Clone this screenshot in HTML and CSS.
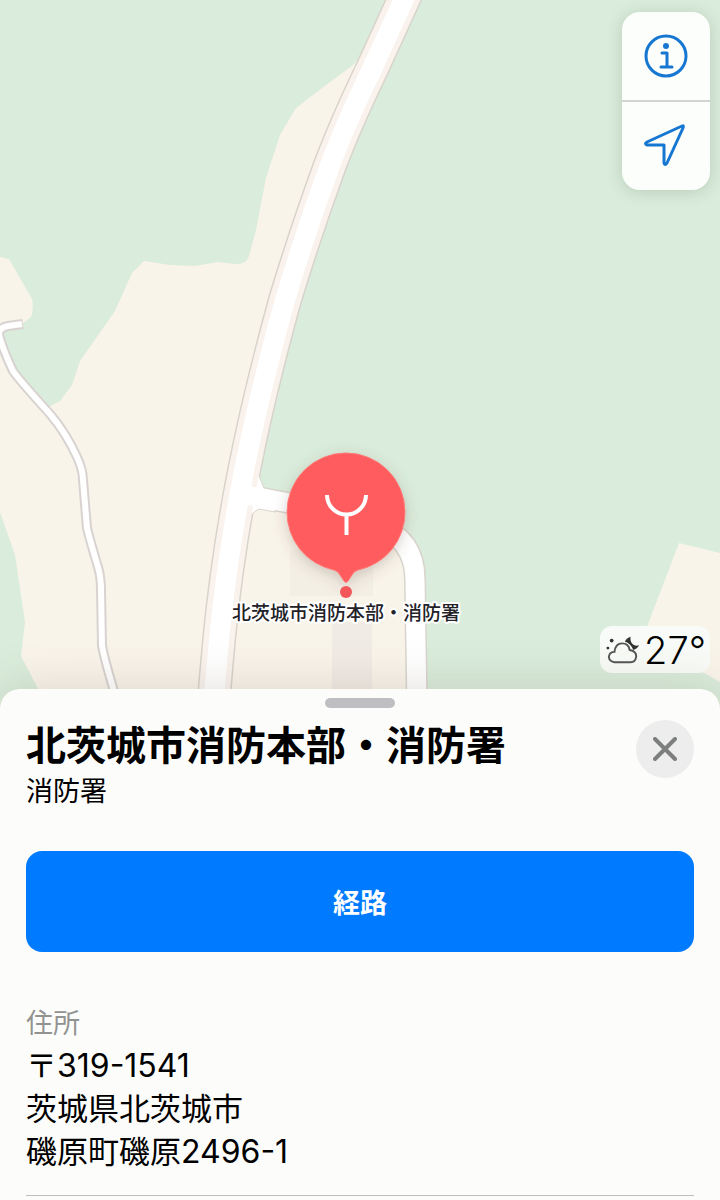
FILE: index.html
```html
<!DOCTYPE html>
<html lang="ja">
<head>
    <meta charset="UTF-8">
    <meta name="viewport" content="width=device-width, initial-scale=1.0">
    <title>北茨城市消防本部・消防署</title>
    <link rel="stylesheet" href="styles.css">
</head>
<body>
    <main class="page">
        <section class="map" aria-label="地図">
            <svg class="map-canvas" viewBox="0 0 720 708">
                <defs>
                    <filter id="pinShadow" x="-30%" y="-30%" width="160%" height="160%">
                        <feDropShadow dx="0" dy="4" stdDeviation="7" flood-color="#5a4a40" flood-opacity="0.25"/>
                    </filter>
                </defs>

                <!-- Land -->
                <path class="land" d="M360 58L352 66L330 82L296 108L280 135L266 178L256 230L249 256Q246 265 235 264L218 262L195 266L170 265L144 261L132 273L115 311L80 361L72 385L60 401L49 407L50 414L13 371L-1 335L8 326L22 324L31 317Q34 308 32 299L9 259L0 257V512L15 555L25 622L21 656L48 708H222L245 500L300 280Z"/>
                <path class="land" d="M248 496H380L412 545L418 708H220Z"/>
                <path class="land" d="M679 543L720 553V682L706 674L640 645Z"/>
                <path class="building" d="M290 550H373V596H290Z"/>
                <path class="building dark" d="M332 622H372V708H332Z"/>

                <!-- Small road -->
                <path class="path-edge" d="M23 324L8 326Q-2 328 -1 335Q3 350 13 371Q20 381 50 414Q66 433 77 457Q83 470 83 480L87 528Q89 537 98 567Q101 577 101 590L102 645Q103 655 119 708"/>
                <path class="path-fill" d="M22 324L8 326Q-2 328 -1 335Q3 350 13 371Q20 381 50 414Q66 433 77 457Q83 470 83 480L87 528Q89 537 98 567Q101 577 101 590L102 645Q103 655 119 708"/>

                <!-- Main road and side road -->
                <path class="side-edge" d="M246 495L289 503L375 525Q415 538 415 580L417 708"/>
                <path class="main-edge" d="M409 -12L372 69Q345 125 329 168Q304 237 285 300Q258 398 243 476Q227 558 219 640L213 708"/>
                <path class="corner-edge" d="M264 453L258 474L264 488L275 491V512L259 509Q249 514 249 522L246 540L232 500Z"/>
                <path class="main-shoulder" d="M409 -12L372 69Q345 125 329 168Q304 237 285 300Q258 398 243 476Q227 558 219 640L213 708"/>
                <path class="side-fill" d="M246 495L289 503L375 525Q415 538 415 580L417 708"/>
                <path class="main-fill" d="M409 -12L372 69Q345 125 329 168Q304 237 285 300Q258 398 243 476Q227 558 219 640L213 708"/>

                <!-- Pin -->
                <path class="pin" filter="url(#pinShadow)" d="M346 453A59 59 0 0 1 405 512A59 59 0 0 1 358 570Q354 571 352 575L348 581Q346 584 344 581L340 575Q338 571 334 570A59 59 0 0 1 287 512A59 59 0 0 1 346 453Z"/>
                <path class="pin-icon" d="M327 495A19.500 19.500 0 0 0 366 495M346.500 515V535"/>
                <circle class="pin-dot" cx="346" cy="592" r="6"/>
                <text class="pin-label" x="346" y="620">北茨城市消防本部・消防署</text>
            </svg>

            <div class="map-controls">
                <button type="button" aria-label="情報">
                    <svg class="icon" viewBox="0 0 44 44">
                        <circle cx="22" cy="22" r="20"/>
                        <path d="M18 19H23V33M17 33H28"/>
                        <circle class="icon-dot" cx="22" cy="12" r="3"/>
                    </svg>
                </button>
                <button type="button" aria-label="現在地">
                    <svg class="icon" viewBox="0 0 44 44">
                        <path d="M38 2L3 18Q0 20 3 21H20V39Q21 42 23 39L39 4Q40 1 38 2Z"/>
                    </svg>
                </button>
            </div>

            <div class="weather">
                <svg class="weather-icon" viewBox="0 0 36 32">
                    <circle cx="6" cy="6" r="2"/>
                    <circle cx="2" cy="14" r="1.500"/>
                    <path d="M26 2C25 9 30 13 35 11Q33 15 29 16Q26 9 20 7Q22 3 26 2Z"/>
                    <path class="cloud" d="M9 29Q3 28 3 23Q4 18 9 18Q10 9 17 9Q24 9 25 16Q32 17 32 23Q31 29 26 29Z"/>
                </svg>
                <span>27°</span>
            </div>
        </section>

        <section class="sheet">
            <div class="grabber"></div>
            <header class="sheet-header">
                <div>
                    <h1>北茨城市消防本部・消防署</h1>
                    <p class="category">消防署</p>
                </div>
                <button type="button" class="close" aria-label="閉じる">
                    <svg viewBox="0 0 24 24"><path d="M2 2L22 22M22 2L2 22"/></svg>
                </button>
            </header>
            <button type="button" class="route">経路</button>
            <div class="address">
                <h2>住所</h2>
                <address>〒<span class="digits">319-1541</span><br>茨城県北茨城市<br>磯原町磯原<span class="digits">2496-1</span></address>
            </div>
        </section>
    </main>
</body>
</html>
```
FILE: styles.css
```css
* {
    box-sizing: border-box;
}

body {
    margin: 0;
    font-family: Inter, "Noto Sans CJK JP", sans-serif;
    background-color: #fcfdfb;
    color: #000;
}

h1, h2, p, address {
    margin: 0;
    font-style: normal;
}

button {
    display: flex;
    justify-content: center;
    align-items: center;
    padding: 0;
    border: none;
    font-family: inherit;
    cursor: pointer;
}

.page {
    display: flex;
    flex-direction: column;
    min-height: 100vh;
    overflow: hidden;
}

/* Map */
.map {
    position: relative;
    background-color: #daecdb;
}

.map-canvas {
    display: block;
    width: 100%;
}

.land {
    fill: #f9f4ea;
}

.building {
    fill: #f4efe5;
}

.building.dark {
    fill: #f0ebe4;
}

.path-edge, .path-fill,
.side-edge, .side-fill,
.main-edge, .main-shoulder, .main-fill {
    fill: none;
}

.path-edge {
    stroke: #d8d3d0;
    stroke-width: 10px;
}

.path-fill {
    stroke: #fff;
    stroke-width: 6px;
}

.side-edge {
    stroke: #d9d5cd;
    stroke-width: 22px;
}

.side-fill {
    stroke: #fff;
    stroke-width: 19px;
}

.main-edge {
    stroke: #d8d3cb;
    stroke-width: 34px;
}

.main-shoulder {
    stroke: #faf3ed;
    stroke-width: 31px;
}

.main-fill {
    stroke: #fff;
    stroke-width: 20px;
}

.corner-edge {
    fill: #fff;
    stroke: #d9d5cd;
    stroke-width: 1px;
}

.pin {
    fill: #ff5c5e;
    stroke: #ff7b76;
    stroke-width: 1px;
}

.pin-icon {
    fill: none;
    stroke: #fff;
    stroke-width: 4px;
}

.pin-dot {
    fill: #f4575a;
}

.pin-label {
    font-size: 19px;
    font-weight: 500;
    text-anchor: middle;
    fill: #222228;
    stroke: #fff;
    stroke-width: 4px;
    stroke-linejoin: round;
    paint-order: stroke;
}

.map-controls {
    position: absolute;
    top: 12px;
    right: 10px;
    width: 88px;
    border-radius: 18px;
    background-color: #fcfefb;
    box-shadow: 0 2px 16px rgba(60, 80, 60, 0.2);
}

.map-controls button {
    width: 100%;
    height: 88px;
    background: none;
}

.map-controls button + button {
    height: 90px;
    border-top: 2px solid #d2d4d2;
}

.icon {
    width: 44px;
    height: 44px;
    fill: none;
    stroke: #1677d2;
    stroke-width: 3px;
    stroke-linejoin: round;
    stroke-linecap: round;
}

.icon-dot {
    fill: #1677d2;
    stroke: none;
}

.weather {
    position: absolute;
    right: 10px;
    bottom: 35px;
    display: flex;
    align-items: center;
    gap: 4px;
    height: 47px;
    padding: 0 4px 0 6px;
    border-radius: 12px;
    background-color: #f8fbf7;
    font-size: 38px;
    font-weight: 300;
}

.weather-icon {
    width: 34px;
    height: 32px;
    fill: #333;
}

.weather-icon .cloud {
    fill: #f8fbf7;
    stroke: #555;
    stroke-width: 2px;
}

/* Place card */
.sheet {
    position: relative;
    flex: 1;
    margin-top: -19px;
    padding: 9px 26px 0;
    border-radius: 20px 20px 0 0;
    background-color: #fcfdfb;
    box-shadow: 0 0 50px rgba(90, 70, 60, 0.18);
}

.grabber {
    width: 70px;
    height: 10px;
    margin: 0 auto;
    border-radius: 5px;
    background-color: #bfbec3;
}

.sheet-header {
    display: flex;
    justify-content: space-between;
    align-items: flex-start;
    margin-top: 10px;
}

h1 {
    font-size: 40px;
    font-weight: 700;
    line-height: 56px;
}

.category {
    font-size: 27px;
    line-height: 36px;
}

.close {
    width: 58px;
    height: 58px;
    margin-top: 2px;
    border-radius: 50%;
    background-color: #ecedec;
}

.close svg {
    width: 24px;
    height: 24px;
    fill: none;
    stroke: #7d7f7e;
    stroke-width: 4px;
    stroke-linecap: round;
}

.route {
    width: 100%;
    height: 101px;
    margin-top: 41px;
    border-radius: 16px;
    background-color: #007aff;
    color: #fff;
    font-size: 27px;
    font-weight: 700;
}

.address {
    margin-top: 52px;
    padding-bottom: 22px;
    border-bottom: 1px solid #bdbebd;
}

h2 {
    color: #929391;
    font-size: 27px;
    font-weight: 400;
    line-height: 40px;
}

address {
    font-size: 31px;
    line-height: 43px;
}

.digits {
    font-size: 32px;
}
```
